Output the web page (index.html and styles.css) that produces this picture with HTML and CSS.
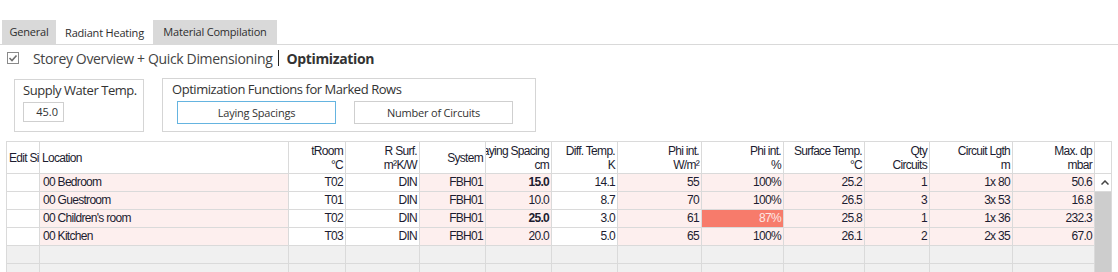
FILE: index.html
```html
<!DOCTYPE html>
<html lang="en">
<head>
    <meta charset="UTF-8">
    <title>Radiant Heating - Optimization</title>
    <link rel="stylesheet" href="styles.css">
</head>
<body>
    <div class="tabs">
        <div class="tab tab-general">General</div>
        <div class="tab tab-radiant active">Radiant Heating</div>
        <div class="tab tab-material">Material Compilation</div>
    </div>

    <div class="view">
        <span class="check">
            <svg width="12" height="12" viewBox="0 0 12 12"><rect x="0.5" y="0.5" width="11" height="11" fill="#fff" stroke="#8a8a8a"/><polyline points="2.5,6 5,8.5 9.5,3.5" fill="none" stroke="#6e6e6e" stroke-width="1.6"/></svg>
        </span>
        <span class="view-title">Storey Overview + Quick Dimensioning</span>
        <span class="view-sep"></span>
        <span class="view-current">Optimization</span>
    </div>

    <div class="groups">
        <div class="group group-supply">
            <div class="group-label">Supply Water Temp.</div>
            <div class="temp-input">45.0</div>
        </div>
        <div class="group group-opt">
            <div class="group-label">Optimization Functions for Marked Rows</div>
            <div class="buttons">
                <button class="btn focused">Laying Spacings</button>
                <button class="btn">Number of Circuits</button>
            </div>
        </div>
    </div>

    <div class="grid">
        <div class="h">Edit Si</div>
        <div class="h">Location</div>
        <div class="h r"><span>tRoom<br>°C</span></div>
        <div class="h r"><span>R Surf.<br>m²K/W</span></div>
        <div class="h r"><span>System</span></div>
        <div class="h r"><span>Laying Spacing<br>cm</span></div>
        <div class="h r"><span>Diff. Temp.<br>K</span></div>
        <div class="h r"><span>Phi int.<br>W/m²</span></div>
        <div class="h r"><span>Phi int.<br>%</span></div>
        <div class="h r"><span>Surface Temp.<br>°C</span></div>
        <div class="h r"><span>Qty<br>Circuits</span></div>
        <div class="h r"><span>Circuit Lgth<br>m</span></div>
        <div class="h r"><span>Max. dp<br>mbar</span></div>
        <div class="h"></div>

        <div class="c"></div>
        <div class="c p">00 Bedroom</div>
        <div class="c r">T02</div>
        <div class="c r">DIN</div>
        <div class="c p r">FBH01</div>
        <div class="c p r b">15.0</div>
        <div class="c r">14.1</div>
        <div class="c p r">55</div>
        <div class="c p r">100%</div>
        <div class="c p r">25.2</div>
        <div class="c p r">1</div>
        <div class="c p r">1x 80</div>
        <div class="c p r">50.6</div>
        <div class="c scroll-up">
            <svg width="8" height="5" viewBox="0 0 8 5"><polyline points="0.5,4.5 4,1 7.5,4.5" fill="none" stroke="#444" stroke-width="1.5"/></svg>
        </div>

        <div class="c"></div>
        <div class="c p">00 Guestroom</div>
        <div class="c r">T01</div>
        <div class="c r">DIN</div>
        <div class="c p r">FBH01</div>
        <div class="c p r">10.0</div>
        <div class="c r">8.7</div>
        <div class="c p r">70</div>
        <div class="c p r">100%</div>
        <div class="c p r">26.5</div>
        <div class="c p r">3</div>
        <div class="c p r">3x 53</div>
        <div class="c p r">16.8</div>
        <div class="thumb"></div>

        <div class="c"></div>
        <div class="c p">00 Children's room</div>
        <div class="c r">T02</div>
        <div class="c r">DIN</div>
        <div class="c p r">FBH01</div>
        <div class="c p r b">25.0</div>
        <div class="c r">3.0</div>
        <div class="c p r">61</div>
        <div class="c hot r">87%</div>
        <div class="c p r">25.8</div>
        <div class="c p r">1</div>
        <div class="c p r">1x 36</div>
        <div class="c p r">232.3</div>

        <div class="c"></div>
        <div class="c p">00 Kitchen</div>
        <div class="c r">T03</div>
        <div class="c r">DIN</div>
        <div class="c p r">FBH01</div>
        <div class="c p r">20.0</div>
        <div class="c r">5.0</div>
        <div class="c p r">65</div>
        <div class="c p r">100%</div>
        <div class="c p r">26.1</div>
        <div class="c p r">2</div>
        <div class="c p r">2x 35</div>
        <div class="c p r">67.0</div>

        <div class="c e"></div><div class="c e"></div><div class="c e"></div><div class="c e"></div>
        <div class="c e"></div><div class="c e"></div><div class="c e"></div><div class="c e"></div>
        <div class="c e"></div><div class="c e"></div><div class="c e"></div><div class="c e"></div>
        <div class="c e"></div>

        <div class="c e"></div><div class="c e"></div><div class="c e"></div><div class="c e"></div>
        <div class="c e"></div><div class="c e"></div><div class="c e"></div><div class="c e"></div>
        <div class="c e"></div><div class="c e"></div><div class="c e"></div><div class="c e"></div>
        <div class="c e"></div>
    </div>
</body>
</html>
```

FILE: styles.css
```css
html, body {
    height: 100%;
}
body {
    margin: 0;
    background: #fff;
    color: #333;
    font-family: "Open Sans", "Noto Sans", sans-serif;
    overflow: hidden;
}

/* tab strip */
.tabs {
    display: flex;
    margin-top: 20px;
    padding-left: 2px;
    border-bottom: 1px solid #d9d9d9;
}
.tab {
    height: 24px;
    line-height: 24px;
    background: #d9d9d9;
    color: #2e2e2e;
    font-size: 11px;
    letter-spacing: -0.2px;
    text-align: center;
    white-space: nowrap;
}
.tab-general {
    width: 54px;
}
.tab-radiant {
    width: 97px;
}
.tab-material {
    width: 124px;
}
.tab.active {
    background: #fff;
    margin-top: 2px;
    height: 22px;
    line-height: 22px;
}

/* view switcher */
.view {
    display: flex;
    align-items: center;
    height: 26px;
    padding-left: 7px;
    font-size: 14px;
    letter-spacing: -0.35px;
    color: #444;
    white-space: nowrap;
}
.check {
    display: flex;
    width: 12px;
    height: 12px;
    margin-right: 14px;
}
.view-sep {
    width: 1px;
    height: 16px;
    background: #222;
    margin: 0 7px 0 6px;
}
.view-current {
    font-weight: bold;
    color: #333;
}

/* group boxes */
.groups {
    display: flex;
    align-items: flex-start;
    padding-left: 14px;
    margin-top: 7px;
}
.group {
    border: 1px solid #d5d5d5;
    box-sizing: border-box;
    height: 54px;
}
.group-supply {
    width: 130px;
    height: 53px;
    margin-top: 1px;
    padding-left: 8px;
}
.group-opt {
    width: 374px;
    margin-left: 18px;
    padding-left: 9px;
}
.group-label {
    font-size: 13px;
    letter-spacing: -0.45px;
    line-height: 18px;
    margin-top: 1px;
    color: #333;
    white-space: nowrap;
}
.temp-input {
    box-sizing: border-box;
    width: 41px;
    height: 20px;
    margin-top: 3px;
    border: 1px solid #cfcfcf;
    font-size: 11px;
    line-height: 18px;
    text-align: right;
    padding-right: 5px;
    color: #333;
}
.buttons {
    display: flex;
    gap: 18px;
    margin-top: 3px;
    margin-left: 5px;
}
.btn {
    box-sizing: border-box;
    width: 159px;
    height: 23px;
    padding: 0;
    background: #fff;
    border: 1px solid #cfcfcf;
    font-family: "Open Sans", "Noto Sans", sans-serif;
    font-size: 11px;
    letter-spacing: -0.2px;
    color: #333;
}
.btn.focused {
    border-color: #65b4e0;
}

/* data grid */
.grid {
    display: grid;
    grid-template-columns: 32px 248px 56px 73px 65px 65px 65px 83px 81px 80px 64px 82px 81px 16px;
    grid-template-rows: 31px repeat(6, 17px);
    gap: 1px;
    padding: 1px;
    width: max-content;
    margin: 9px 0 0 6px;
    background: #dadada;
    font-family: "Liberation Sans", Arial, sans-serif;
    font-size: 12px;
    letter-spacing: -0.7px;
    color: #1c1c30;
}
.h {
    background: #fff;
    display: flex;
    align-items: center;
    padding-left: 2px;
    overflow: hidden;
    white-space: nowrap;
    line-height: 14px;
}
.h.r {
    justify-content: flex-end;
    text-align: right;
    padding: 0 2px 0 0;
}
.c {
    background: #fff;
    line-height: 17px;
    padding-left: 3px;
    white-space: nowrap;
    overflow: hidden;
}
.c.r {
    text-align: right;
    padding: 0 2px 0 0;
}
.c.p {
    background: #fdefee;
}
.c.b {
    font-weight: bold;
}
.c.hot {
    background: #f77b6b;
    color: #fde7e4;
}
.c.e {
    background: #f0f0f0;
}
.scroll-up {
    display: flex;
    align-items: center;
    justify-content: center;
}
.thumb {
    grid-column: 14;
    grid-row: 3 / span 5;
    background: #cdcdcd;
}
```
